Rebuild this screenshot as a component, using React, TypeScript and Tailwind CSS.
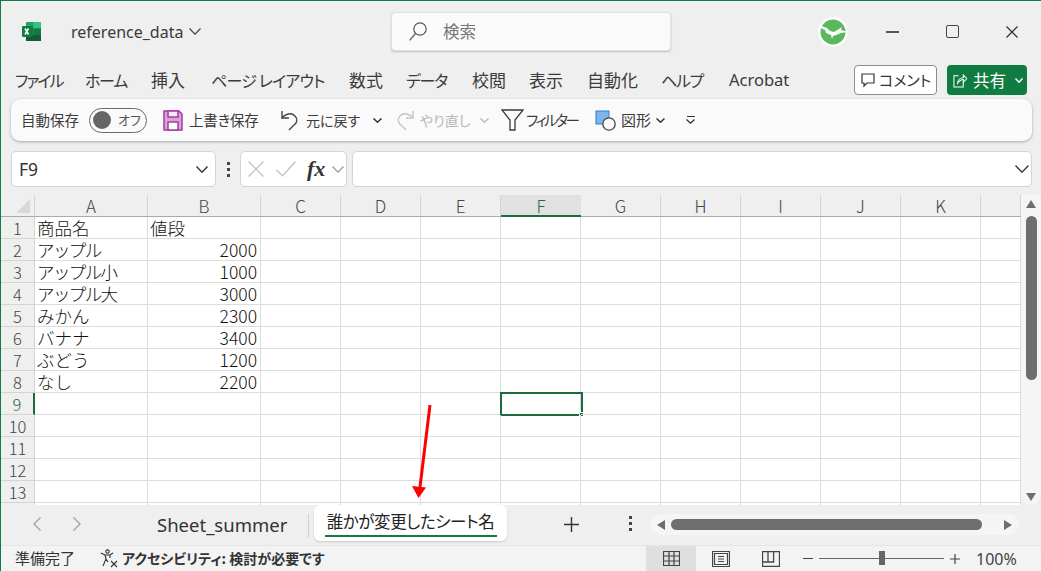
const menus = [
  { label: 'ファイル', cls: 'w-[47px] text-[16px] tracking-[-2px]' },
  { label: 'ホーム', cls: 'w-[43px] ml-[23px] text-[16px] tracking-[-1.3px]' },
  { label: '挿入', cls: 'w-[34px] ml-[23px] text-[17px]' },
  { label: 'ページ レイアウト', cls: 'w-[113px] ml-[26px] text-[16px] tracking-[-0.8px]' },
  { label: '数式', cls: 'w-[34px] ml-[25px] text-[17px]' },
  { label: 'データ', cls: 'w-[43px] ml-[23px] text-[16px] tracking-[-1.3px]' },
  { label: '校閲', cls: 'w-[34px] ml-[23px] text-[17px]' },
  { label: '表示', cls: 'w-[34px] ml-[23px] text-[17px]' },
  { label: '自動化', cls: 'w-[50px] ml-[24px] text-[17px]' },
  { label: 'ヘルプ', cls: 'w-[43px] ml-[24px] text-[16px] tracking-[-1.3px]' },
  { label: 'Acrobat', cls: 'w-[65px] ml-[25px] text-[16.5px] font-["Noto_Sans",sans-serif]' },
];

const columns = [
  { name: 'A', cls: 'w-[113px]' },
  { name: 'B', cls: 'w-[113px]' },
  { name: 'C', cls: 'w-[80px]' },
  { name: 'D', cls: 'w-[80px]' },
  { name: 'E', cls: 'w-[80px]' },
  { name: 'F', cls: 'w-[80px]' },
  { name: 'G', cls: 'w-[80px]' },
  { name: 'H', cls: 'w-[80px]' },
  { name: 'I', cls: 'w-[80px]' },
  { name: 'J', cls: 'w-[80px]' },
  { name: 'K', cls: 'w-[80px]' },
  { name: '', cls: 'w-[40px]' },
];

const rows: [string, string, string][] = [
  ['商品名', '値段', ''],
  ['アップル', '2000', 'tracking-[-1.6px]'],
  ['アップル小', '1000', 'tracking-[-1.6px]'],
  ['アップル大', '3000', 'tracking-[-1.6px]'],
  ['みかん', '2300', ''],
  ['バナナ', '3400', ''],
  ['ぶどう', '1200', ''],
  ['なし', '2200', ''],
  ['', '', ''],
  ['', '', ''],
  ['', '', ''],
  ['', '', ''],
  ['', '', ''],
  ['', '', ''],
];

function Chevron({ w, h, color, sw = 1.2, cls = '' }: { w: number; h: number; color: string; sw?: number; cls?: string }) {
  return (
    <svg className={`shrink-0 ${cls}`} width={w} height={h} viewBox={`0 0 ${w} ${h}`} fill="none" stroke={color} strokeWidth={sw}>
      <path d={`M.5 .5L${w / 2} ${h - 0.8}L${w - 0.5} .5`} />
    </svg>
  );
}

function Cross({ size, color, sw = 1.2, cls = '' }: { size: number; color: string; sw?: number; cls?: string }) {
  return (
    <svg className={`shrink-0 ${cls}`} width={size} height={size} viewBox={`0 0 ${size} ${size}`} fill="none" stroke={color} strokeWidth={sw}>
      <path d={`M.5 .5L${size - 0.5} ${size - 0.5}M${size - 0.5} .5L.5 ${size - 0.5}`} />
    </svg>
  );
}

function PlusMark({ size, color, sw = 1.2, cls = '' }: { size: number; color: string; sw?: number; cls?: string }) {
  return (
    <svg className={`shrink-0 ${cls}`} width={size} height={size} viewBox={`0 0 ${size} ${size}`} fill="none" stroke={color} strokeWidth={sw}>
      <path d={`M0 ${size / 2}H${size}M${size / 2} 0V${size}`} />
    </svg>
  );
}

function ExcelLogo() {
  return (
    <svg width="21" height="21" viewBox="0 0 21 21">
      <rect x="5" y="1" width="15" height="19" rx="1" fill="#21a366" />
      <rect x="12.5" y="1" width="7.5" height="6.5" fill="#33c481" />
      <rect x="12.5" y="7.5" width="7.5" height="6" fill="#107c41" />
      <rect x="5" y="13.5" width="15" height="6.5" fill="#185c37" />
      <rect x="1" y="5" width="11" height="11" rx="1" fill="#107c41" />
      <path d="M4 7.5l3.5 6M7.5 7.5L4 13.5" stroke="#fff" strokeWidth="1.6" fill="none" />
    </svg>
  );
}

function Avatar() {
  return (
    <svg width="30" height="30" viewBox="0 0 30 30">
      <circle cx="15" cy="15" r="15" fill="#fff" />
      <circle cx="15" cy="15" r="12.5" fill="#5cb85c" />
      <path d="M1 8l8 3 3 3 4 1 5-3 3-2-1 3 7 2-7 1-5 2-3 1-1 3-1-4-5-2-1-3-4-2z" fill="#fff" />
    </svg>
  );
}

function SearchIcon() {
  return (
    <svg className="shrink-0" width="18" height="19" viewBox="0 0 18 19" fill="none" stroke="#555" strokeWidth="1.2">
      <circle cx="11" cy="7" r="6.2" />
      <path d="M6.5 11.5L.6 18.4" />
    </svg>
  );
}

function SaveIcon() {
  return (
    <svg width="20" height="21" viewBox="0 0 20 21">
      <path d="M1 1h15l3 3v16H1z" fill="#d8a4d8" stroke="#a33da3" strokeWidth="1.5" />
      <rect x="5" y="1" width="10" height="6" fill="#f6e9f6" stroke="#a33da3" strokeWidth="1.5" />
      <rect x="5" y="12" width="10" height="8" fill="#fff" stroke="#a33da3" strokeWidth="1.5" />
    </svg>
  );
}

function UndoIcon() {
  return (
    <svg width="20" height="21" viewBox="0 0 20 21" fill="none" stroke="#444" strokeWidth="1.4">
      <path d="M1 1v7h7" />
      <path d="M1 8c3-4 9-6 13-2 3 3 2 7-1 9l-5 5" />
    </svg>
  );
}

function RedoIcon() {
  return (
    <svg width="20" height="21" viewBox="0 0 20 21" fill="none" stroke="#c4c4c4" strokeWidth="1.4">
      <path d="M18 1v7h-7" />
      <path d="M18 8c-3-4-9-6-13-2-3 3-2 7 1 9l5 5" />
    </svg>
  );
}

function FilterIcon() {
  return (
    <svg width="23" height="22" viewBox="0 0 23 22" fill="none" stroke="#3b3b3b" strokeWidth="1.3">
      <path d="M1 1h21l-8 10v10H9V11z" />
    </svg>
  );
}

function ShapeIcon() {
  return (
    <svg width="21" height="21" viewBox="0 0 21 21">
      <rect x="1" y="1" width="13" height="13" fill="#7db5ec" stroke="#2b7cd3" strokeWidth="1" />
      <circle cx="14" cy="14" r="6.2" fill="#fafafa" stroke="#444" strokeWidth="1.3" />
    </svg>
  );
}

function AccessIcon() {
  return (
    <svg width="19" height="19" viewBox="0 0 19 19" fill="none" stroke="#333" strokeWidth="1.1">
      <circle cx="7.5" cy="2.6" r="1.7" />
      <path d="M1 4l4 2h5l3-2M5 6l1 4-3 7M10 6v3M6 10l2 3" />
      <path d="M11 12l6 6M17 12l-6 6" />
    </svg>
  );
}

function Dots() {
  return (
    <div className="flex flex-col gap-[3px]">
      <div className="w-[3px] h-[3px] bg-[#444]" />
      <div className="w-[3px] h-[3px] bg-[#444]" />
      <div className="w-[3px] h-[3px] bg-[#444]" />
    </div>
  );
}

function TitleRow() {
  return (
    <div className="h-[61px] flex items-center shrink-0">
      <div className="ml-[20px] w-[21px] flex"><ExcelLogo /></div>
      <span className="ml-[29px] text-[16px] text-[#3a3a3a] w-[113px] font-['Noto_Sans',sans-serif]">reference_data</span>
      <Chevron w={12} h={7} color="#444" cls="ml-[5px]" />
      <div className="ml-[190px] w-[280px] h-[39px] bg-[#fafafa] rounded-[4px] border border-[#e2e2e2] shadow-[0_1px_2px_rgba(0,0,0,0.2)] flex items-center">
        <div className="ml-[17px] flex"><SearchIcon /></div>
        <span className="ml-[16px] text-[16.5px] text-[#767676]">検索</span>
      </div>
      <div className="ml-[147px] flex"><Avatar /></div>
      <div className="ml-[38px] w-[13px] h-[2px] bg-[#555]" />
      <div className="ml-[47px] w-[13px] h-[13px] border-[1.5px] border-[#444] rounded-[2px]" />
      <Cross size={12} color="#333" sw={1.3} cls="ml-[47px]" />
    </div>
  );
}

function MenuRow() {
  return (
    <div className="h-[36px] flex items-center shrink-0 pl-[14px]">
      {menus.map((m) => (
        <span key={m.label} className={`${m.cls} whitespace-nowrap text-[#3b3b3b] [font-feature-settings:"palt"]`}>
          {m.label}
        </span>
      ))}
      <div className="ml-[60px] w-[83px] h-[30px] bg-white border border-[#8c8c8c] rounded-[4px] flex items-center pl-[6px]">
        <svg width="14" height="15" viewBox="0 0 14 15" fill="none" stroke="#333" strokeWidth="1.2">
          <path d="M1 1h12v9H6l-3 3v-3H1z" />
        </svg>
        <span className="ml-[4px] text-[15px] text-[#333] whitespace-nowrap [font-feature-settings:'palt']">コメント</span>
      </div>
      <div className="ml-[10px] w-[80px] h-[30px] bg-[#107c41] rounded-[4px] flex items-center pl-[6px] text-white">
        <svg className="shrink-0" width="14" height="15" viewBox="0 0 15 16" fill="none" stroke="#fff" strokeWidth="1.1">
          <path d="M6 3H1v12h10v-5" />
          <path d="M5 11c0-4 3-6 6-6V2l4 4-4 4V7c-2 0-4 1-6 4z" />
        </svg>
        <span className="ml-[6px] w-[34px] text-[16.5px] whitespace-nowrap">共有</span>
        <Chevron w={8} h={5} color="#fff" sw={1.5} cls="ml-[8px]" />
      </div>
    </div>
  );
}

function QuickToolbar() {
  return (
    <div className="mt-px ml-[10px] w-[1021px] h-[42px] bg-[#fafafa] rounded-[9px] shadow-[0_1px_3px_rgba(0,0,0,0.3)] flex items-center pl-[10px] shrink-0 text-[14.5px] text-[#3b3b3b] whitespace-nowrap [font-feature-settings:'palt']">
      <span className="w-[60px]">自動保存</span>
      <div className="ml-[8px] w-[58px] h-[25px] border border-[#6b6b6b] rounded-full flex items-center pl-[3px]">
        <div className="w-[18px] h-[18px] rounded-full bg-[#666]" />
        <span className="ml-[7px] text-[13px] text-[#555]">オフ</span>
      </div>
      <div className="ml-[16px] flex"><SaveIcon /></div>
      <span className="ml-[6px] w-[71px] tracking-[-0.2px]">上書き保存</span>
      <div className="ml-[21px] flex"><UndoIcon /></div>
      <span className="ml-[5px] w-[55px] text-[14px]">元に戻す</span>
      <Chevron w={9} h={5} color="#333" sw={1.5} cls="ml-[12px]" />
      <div className="ml-[13px] w-[20px] flex"><RedoIcon /></div>
      <span className="ml-[5px] w-[48px] text-[14px] text-[#b9b9b9]">やり直し</span>
      <Chevron w={9} h={5} color="#bdbdbd" sw={1.5} cls="ml-[12px]" />
      <div className="ml-[12px] flex"><FilterIcon /></div>
      <span className="ml-[2px] w-[53px] tracking-[-2.4px]">フィルター</span>
      <div className="ml-[16px] flex"><ShapeIcon /></div>
      <span className="ml-[5px] w-[31px] text-[15px]">図形</span>
      <Chevron w={9} h={5} color="#333" sw={1.5} cls="ml-[4px]" />
      <div className="ml-[21px] flex flex-col items-center gap-[2px]">
        <div className="w-[8px] h-[1.2px] bg-[#333]" />
        <Chevron w={9} h={5} color="#333" sw={1.3} />
      </div>
    </div>
  );
}

function FormulaRow() {
  return (
    <div className="mt-[10px] ml-[10px] h-[36px] flex items-center shrink-0">
      <div className="w-[205px] h-full bg-white border border-[#d4d4d4] rounded-[5px] flex items-center pl-[7px] pr-[7px] justify-between">
        <span className="text-[17.5px] text-[#333] font-['Noto_Sans',sans-serif]">F9</span>
        <Chevron w={12} h={7} color="#333" sw={1.4} />
      </div>
      <div className="ml-[11px] w-[3px] flex"><Dots /></div>
      <div className="ml-[10px] w-[107px] h-full bg-white border border-[#d4d4d4] rounded-[5px] flex items-center pl-[7px]">
        <Cross size={16} color="#bdbdbd" />
        <svg className="ml-[12px] shrink-0" width="20" height="16" viewBox="0 0 20 16" fill="none" stroke="#bdbdbd" strokeWidth="1.2">
          <path d="M.5 9l6 6L19.5 .5" />
        </svg>
        <span className="ml-[11px] w-[19px] text-[22px] leading-[26px] italic font-bold text-[#333] font-['Liberation_Serif',serif]">fx</span>
        <Chevron w={12} h={7} color="#999" cls="ml-[6px]" />
      </div>
      <div className="ml-[5px] w-[680px] h-full bg-white border border-[#d4d4d4] rounded-[5px] flex items-center justify-end pr-[2px]">
        <Chevron w={14} h={8} color="#333" sw={1.3} />
      </div>
    </div>
  );
}

function Grid() {
  return (
    <div className="mt-[8px] flex-1 min-h-0 flex bg-[#efefef]">
      <div className="w-[1020px] overflow-hidden font-['Noto_Sans_CJK_JP',sans-serif] font-light">
        <div className="flex h-[22px] bg-[#efefef] border-b border-[#ababab]">
          <div className="w-[34px] shrink-0 border-r border-[#d4d4d4] flex items-end justify-end pr-[4px] pb-[3px]">
            <div className="w-0 h-0 border-l-[14px] border-l-transparent border-b-[14px] border-b-[#d8d8d8]" />
          </div>
          {columns.map((c) =>
            c.name === 'F' ? (
              <div key="F" className={`${c.cls} shrink-0 -mb-px bg-[#e1e1e1] border-b-2 border-[#1a6b3f] text-[#1a6b3f] text-[17px] leading-[21px] text-center`}>
                F
              </div>
            ) : (
              <div key={c.cls + c.name} className={`${c.cls} shrink-0 border-r border-[#d4d4d4] text-[17px] leading-[21px] text-center text-[#444]`}>
                {c.name}
              </div>
            ),
          )}
        </div>
        {rows.map((r, i) => (
          <div key={i} className="flex h-[22px] bg-white">
            <div className={`w-[34px] shrink-0 border-r border-b border-[#d4d4d4] bg-[#efefef] text-[16.5px] leading-[22px] text-center ${i === 8 ? 'text-[#1a6b3f] bg-[#e1e1e1] border-r-2 border-r-[#1a6b3f]' : 'text-[#444]'}`}>
              {i + 1}
            </div>
            {columns.map((c, j) => (
              <div key={c.cls + c.name} className={`${c.cls} relative shrink-0 border-r border-b border-[#dcdcdc] text-[17.5px] leading-[21px] text-[#111] px-[2px] overflow-visible whitespace-nowrap ${j === 0 ? r[2] : ''} ${j === 1 && i > 0 ? 'text-right pr-[3px] text-[16.5px]' : ''}`}>
                {j === 0 ? r[0] : j === 1 ? r[1] : ''}
                {i === 8 && c.name === 'F' && (
                  <div className="absolute -left-[1px] -top-[1px] w-[83px] h-[24px] border-2 border-[#1a6b3f]">
                    <div className="absolute -right-[3px] -bottom-[3px] w-[5px] h-[5px] bg-[#1a6b3f] border border-white" />
                  </div>
                )}
              </div>
            ))}
          </div>
        ))}
      </div>
      <div className="w-[20px] bg-[#f5f5f5] rounded-b-[10px] flex flex-col items-center pt-[5px]">
        <div className="w-0 h-0 border-x-[5px] border-x-transparent border-b-[8px] border-b-[#6e6e6e]" />
        <div className="mt-[8px] w-[11px] h-[164px] rounded-full bg-[#6e6e6e]" />
        <div className="mt-auto mb-[4px] w-0 h-0 border-x-[5px] border-x-transparent border-t-[8px] border-t-[#6e6e6e]" />
      </div>
    </div>
  );
}

function TabRow() {
  return (
    <div className="h-[40px] flex items-start shrink-0 bg-[#efefef] text-[#333]">
      <svg className="mt-[12px] ml-[32px] shrink-0" width="8" height="14" viewBox="0 0 8 14" fill="none" stroke="#a0a0a0" strokeWidth="1.3">
        <path d="M7.5 .5L1 7l6.5 6.5" />
      </svg>
      <svg className="mt-[12px] ml-[32px] shrink-0" width="8" height="14" viewBox="0 0 8 14" fill="none" stroke="#a0a0a0" strokeWidth="1.3">
        <path d="M.5 .5L7 7 .5 13.5" />
      </svg>
      <span className="mt-[6px] ml-[76px] w-[131px] text-[18.5px] leading-[28px] whitespace-nowrap font-['Noto_Sans',sans-serif]">Sheet_summer</span>
      <div className="mt-[9px] ml-[20px] w-px h-[24px] bg-[#d0d0d0]" />
      <div className="ml-[5px] w-[193px] h-[36px] bg-white rounded-[6px] shadow-[0_1px_2px_rgba(0,0,0,0.15)] flex flex-col items-center">
        <span className="mt-[4px] text-[16.5px] leading-[25px] tracking-[-0.4px] whitespace-nowrap [font-feature-settings:'palt'] text-[#222]">誰かが変更したシート名</span>
        <div className="mt-[1px] w-[172px] h-[2px] bg-[#107c41]" />
      </div>
      <PlusMark size={15} color="#333" sw={1.4} cls="mt-[12px] ml-[57px]" />
      <div className="mt-[11px] ml-[50px] flex"><Dots /></div>
      <div className="mt-[9px] ml-[18px] w-[369px] h-[21px] bg-[#f5f5f5] rounded-full flex items-center pl-[7px]">
        <div className="w-0 h-0 border-y-[5px] border-y-transparent border-r-[8px] border-r-[#6e6e6e]" />
        <div className="ml-[6px] w-[311px] h-[11px] rounded-full bg-[#6e6e6e]" />
        <div className="ml-[22px] w-0 h-0 border-y-[5px] border-y-transparent border-l-[8px] border-l-[#6e6e6e]" />
      </div>
    </div>
  );
}

function StatusBar() {
  return (
    <div className="h-[26px] flex items-center shrink-0 bg-[#f3f3f3] border-t border-[#e6e6e6] text-[#333] whitespace-nowrap">
      <span className="ml-[14px] w-[61px] text-[15px] [font-feature-settings:'palt']">準備完了</span>
      <div className="ml-[24px] flex"><AccessIcon /></div>
      <span className="ml-[3px] w-[205px] text-[14px] font-bold [font-feature-settings:'palt']">アクセシビリティ: 検討が必要です</span>
      <div className="ml-[319px] w-[50px] h-full bg-[#dfdfdf] flex items-center justify-center">
        <svg width="17" height="15" viewBox="0 0 17 15" fill="none" stroke="#444" strokeWidth="1.2">
          <path d="M.5.5h16v14H.5zM.5 5h16M.5 10h16M6 .5v14M11 .5v14" />
        </svg>
      </div>
      <div className="w-[50px] flex justify-center">
        <svg width="18" height="16" viewBox="0 0 18 16" fill="none" stroke="#444" strokeWidth="1.2">
          <path d="M.5.5h17v15H.5zM2.5 2.5h13v11h-13zM6 5.5h6M6 8h6M6 10.5h6" />
        </svg>
      </div>
      <div className="w-[50px] flex justify-center">
        <svg width="18" height="16" viewBox="0 0 18 16" fill="none" stroke="#444" strokeWidth="1.3">
          <path d="M.5.5h17v15H.5zM.6 11h11V.5M6 .5V11" />
        </svg>
      </div>
      <div className="ml-[7px] w-[10px] h-px bg-[#444]" />
      <div className="ml-[6px] w-[125px] h-px bg-[#666] relative">
        <div className="absolute left-[60px] -top-[7px] w-[6px] h-[14px] bg-[#666]" />
      </div>
      <PlusMark size={10} color="#444" cls="ml-[6px]" />
      <span className="ml-[16px] text-[16px] font-['Noto_Sans',sans-serif] text-[#444]">100%</span>
    </div>
  );
}

export default function App() {
  return (
    <div className="relative w-[1041px] h-[571px] overflow-hidden flex flex-col bg-[#efefef] border-t border-l border-t-[#107c41] border-l-[#107c41] font-['Noto_Sans_CJK_JP','Noto_Sans',sans-serif]">
      <TitleRow />
      <MenuRow />
      <QuickToolbar />
      <FormulaRow />
      <Grid />
      <TabRow />
      <StatusBar />
      {/* red annotation arrow */}
      <svg className="absolute left-[400px] top-[402px]" width="40" height="100" viewBox="0 0 40 100">
        <path d="M29 2L19 84" stroke="#f00" strokeWidth="3" fill="none" />
        <path d="M11 83l14 1.5-7.5 10.5z" fill="#f00" />
      </svg>
    </div>
  );
}
